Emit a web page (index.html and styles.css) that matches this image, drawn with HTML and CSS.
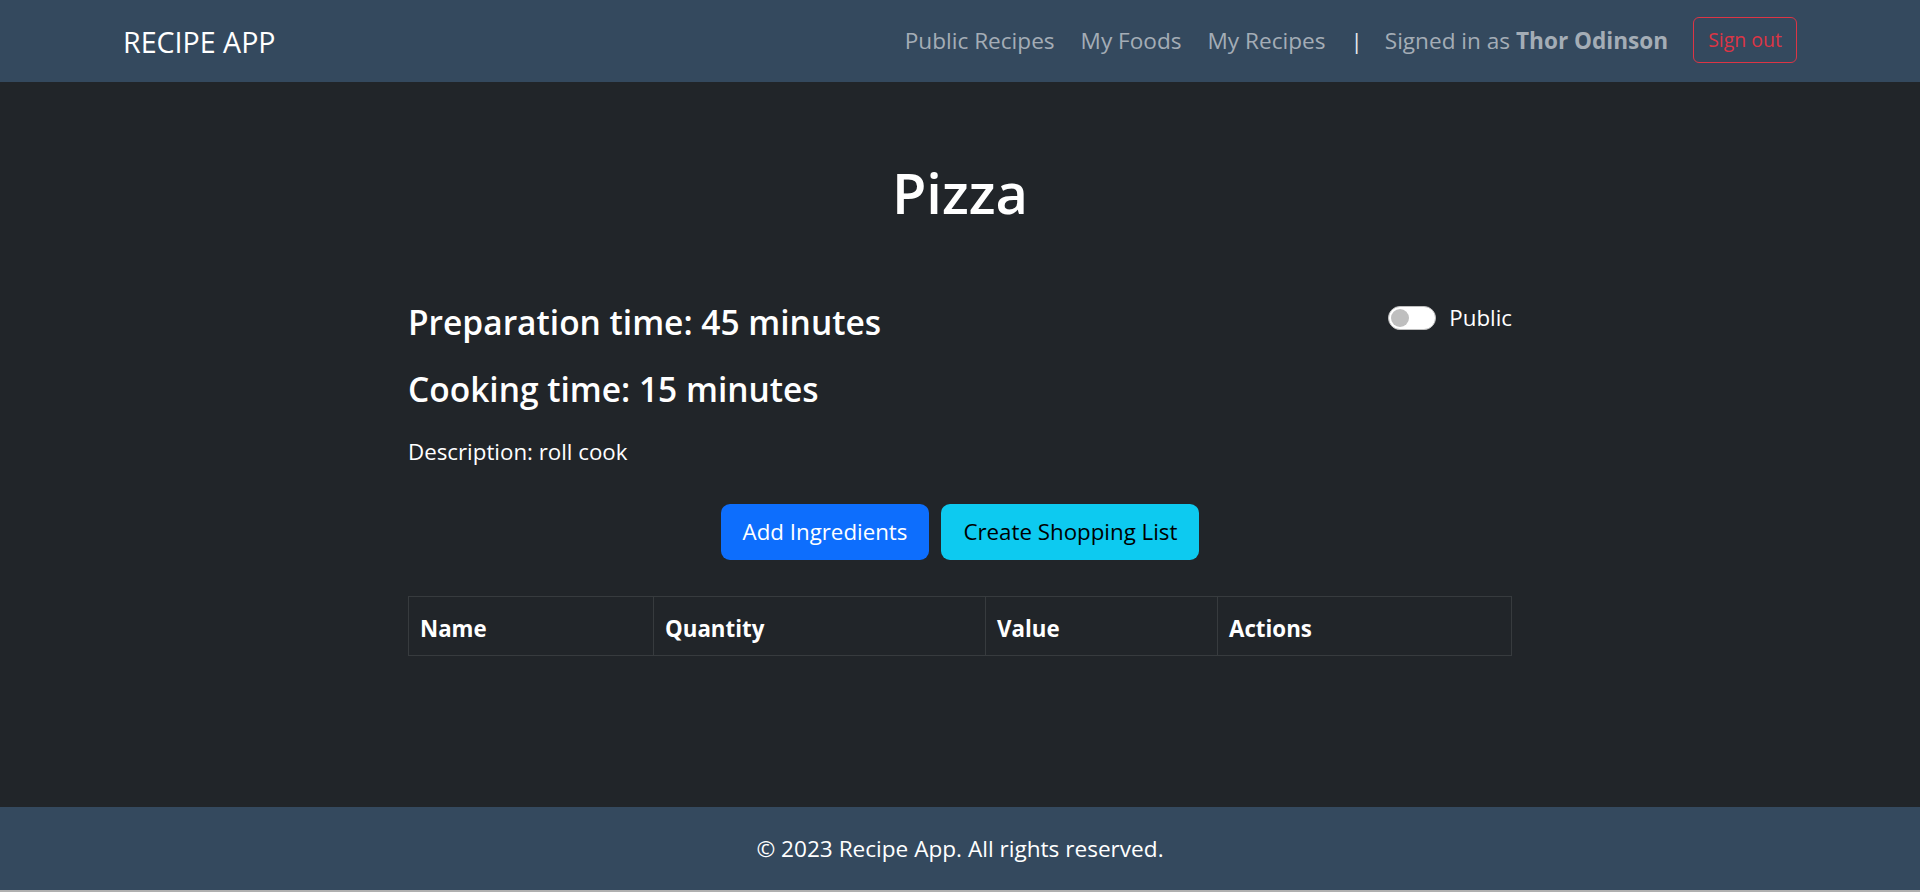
FILE: index.html
```html
<!DOCTYPE html>
<html lang="en">
<head>
<meta charset="utf-8">
<title>Recipe App - Pizza</title>
<link rel="stylesheet" href="styles.css">
</head>
<body>
<header class="navbar">
  <div class="nav-container">
    <a class="brand" href="#">RECIPE APP</a>
    <nav class="nav-right">
      <a class="nav-link" href="#">Public Recipes</a>
      <a class="nav-link" href="#">My Foods</a>
      <a class="nav-link" href="#">My Recipes</a>
      <span class="sep">|</span>
      <span class="signed">Signed in as <strong>Thor Odinson</strong></span>
      <button class="btn-signout" type="button">Sign out</button>
    </nav>
  </div>
</header>
<main class="main">
  <section class="recipe">
    <h1 class="title">Pizza</h1>
    <div class="info-row">
      <div class="info">
        <h4 class="time prep">Preparation time: 45 minutes</h4>
        <h4 class="time cook">Cooking time: 15 minutes</h4>
        <p class="desc">Description: roll cook</p>
      </div>
      <label class="switch-wrap">
        <span class="switch"><span class="knob"></span></span>
        <span class="switch-label">Public</span>
      </label>
    </div>
    <div class="actions">
      <button class="btn btn-primary" type="button">Add Ingredients</button>
      <button class="btn btn-info" type="button">Create Shopping List</button>
    </div>
    <table class="ingredients">
      <colgroup>
        <col class="c-name"><col class="c-qty"><col class="c-val"><col class="c-act">
      </colgroup>
      <thead>
        <tr><th>Name</th><th>Quantity</th><th>Value</th><th>Actions</th></tr>
      </thead>
    </table>
  </section>
</main>
<footer class="footer">
  <p>© 2023 Recipe App. All rights reserved.</p>
</footer>
</body>
</html>
```
FILE: styles.css
```css
* { box-sizing: border-box; }
html, body { margin: 0; padding: 0; }
body {
  height: 892px;
  display: flex;
  flex-direction: column;
  background: #212529;
  color: #fff;
  font-family: "Open Sans", "Noto Sans", sans-serif;
  font-size: 22.3px;
  line-height: 36px;
}
a { text-decoration: none; }

/* navbar */
.navbar {
  height: 82px;
  background: #34495e;
  flex: none;
}
.nav-container {
  max-width: 1710px;
  height: 100%;
  margin: 0 auto;
  padding: 0 18px;
  display: flex;
  align-items: center;
  justify-content: space-between;
}
.brand {
  color: #fff;
  font-size: 28.6px;
  line-height: 42px;
  margin-top: 1px;
}
.nav-right {
  display: flex;
  align-items: center;
}
.nav-link {
  color: #a4adb6;
  padding: 0 13px;
  font-size: 22.6px;
}
.sep {
  color: #e9ecef;
  padding: 0 22px 0 12px;
}
.signed { color: #a4adb6; font-size: 22.6px; }
.signed strong { font-weight: 700; }
.btn-signout {
  margin-left: 25px;
  height: 46px;
  padding: 0 14px;
  background: transparent;
  border: 1.5px solid #dc3545;
  border-radius: 6px;
  color: #dc3545;
  font-family: inherit;
  font-size: 19.5px;
  line-height: 30px;
  margin-top: -2px;
}

/* main */
.main {
  flex: 1;
  padding-top: 77px;
}
.recipe {
  width: 1104px;
  margin: 0 auto;
}
.title {
  margin: 0;
  text-align: center;
  font-size: 56px;
  line-height: 67px;
  font-weight: 600;
}
.info-row {
  margin-top: 76px;
  display: flex;
  justify-content: space-between;
  align-items: flex-start;
}
.time {
  margin: 0;
  font-size: 33.5px;
  line-height: 40px;
  font-weight: 600;
}
.cook { margin-top: 27px; }
.desc {
  margin: 25px 0 0;
}
.switch-wrap {
  display: flex;
  align-items: center;
  gap: 13px;
  margin-top: -2px;
}
.switch {
  width: 48px;
  height: 24px;
  border-radius: 12px;
  background: #fff;
  border: 1.5px solid #bfbfbf;
  display: flex;
  align-items: center;
  padding-left: 2px;
}
.knob {
  width: 18px;
  height: 18px;
  border-radius: 50%;
  background: #bfbfbf;
}
.switch-label { color: #fff; }

.actions {
  margin-top: 34px;
  display: flex;
  justify-content: center;
  gap: 12px;
}
.btn {
  height: 56px;
  padding: 0 22px;
  border: none;
  border-radius: 9px;
  font-family: inherit;
  font-size: 22.3px;
  line-height: 36px;
}
.btn-primary { background: #0d6efd; color: #fff; }
.btn-info { background: #0dcaf0; color: #000; }

.ingredients {
  margin-top: 36px;
  width: 100%;
  border-collapse: collapse;
  table-layout: fixed;
}
.c-name { width: 245px; }
.c-qty { width: 332px; }
.c-val { width: 232px; }
.c-act { width: 294px; }
.ingredients th {
  border: 1.5px solid #373b3e;
  padding: 15px 11px 9px;
  text-align: left;
  font-weight: 700;
  color: #fff;
  line-height: 34px;
}

/* footer */
.footer {
  flex: none;
  height: 85px;
  background: #34495e;
  border-bottom: 2px solid #b0b0b0;
  display: flex;
  align-items: center;
  justify-content: center;
}
.footer p {
  margin: 0;
  color: #fff;
  font-size: 22.6px;
}
```
